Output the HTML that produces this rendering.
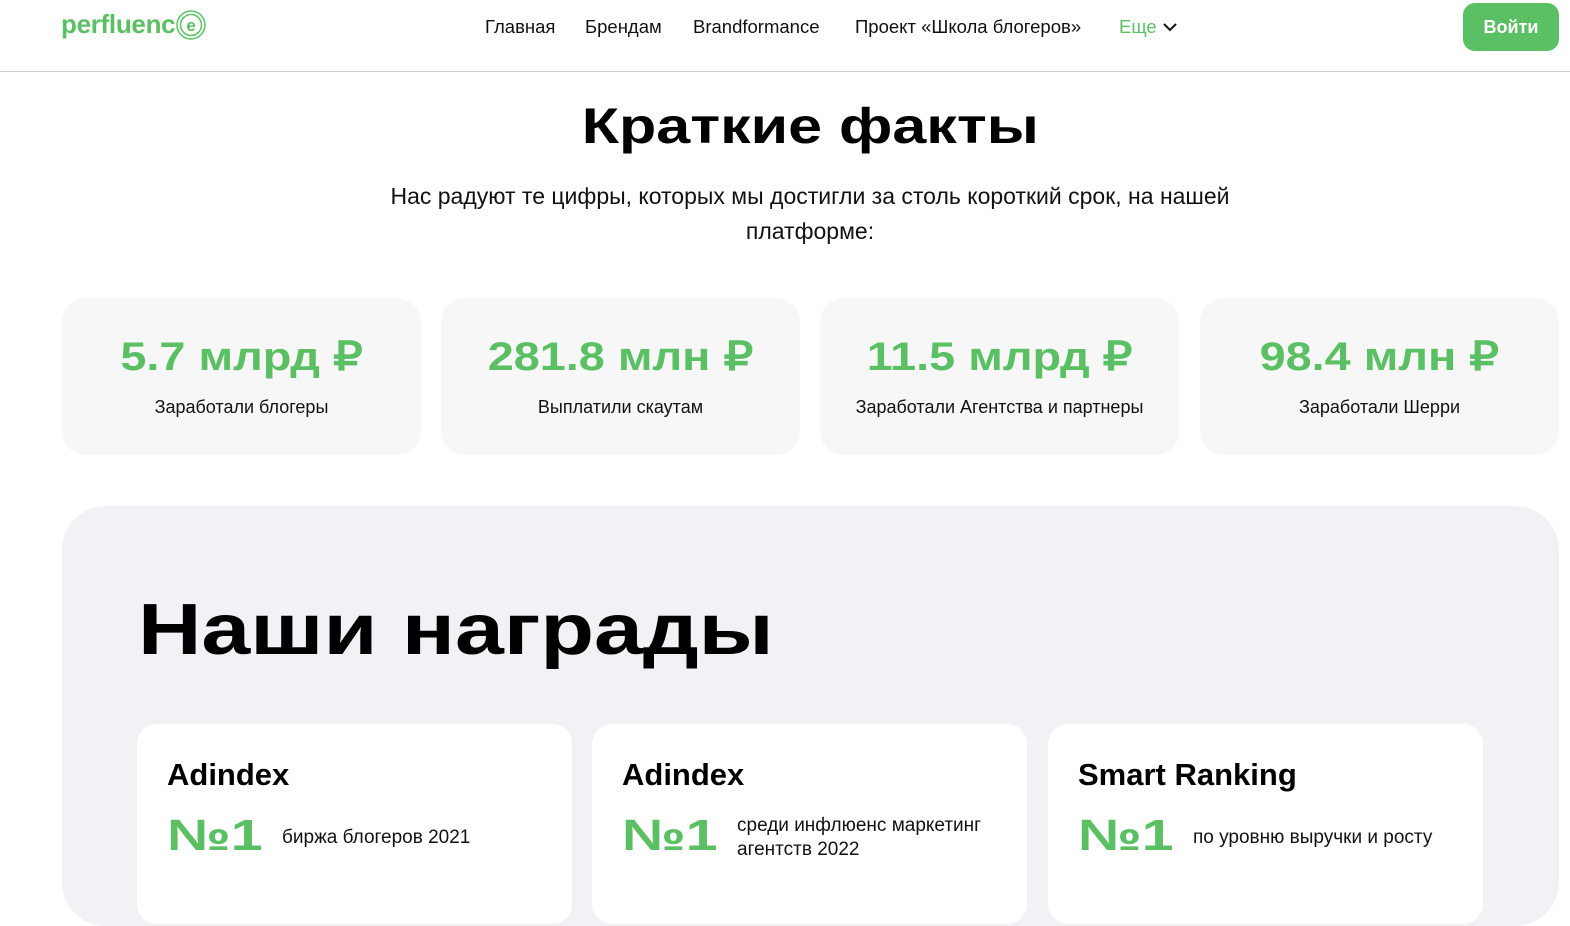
<!DOCTYPE html>
<html><head><meta charset="utf-8"><style>
*{margin:0;padding:0;box-sizing:border-box}
body{width:1570px;height:896px;overflow:hidden;background:#fff;font-family:"Liberation Sans",sans-serif;color:#000;position:relative}
.hdr{position:absolute;left:0;top:0;width:1570px;height:72px;border-bottom:1px solid #cfcfcf}
.logo{position:absolute;left:61px;top:9px;font-weight:bold;font-size:26px;color:#5bbf63;letter-spacing:-0.3px}
.nav{position:absolute;top:16px;font-size:18.5px;color:#111}
.btn{position:absolute;left:1463px;top:3px;width:96px;height:48px;border-radius:12px;background:#5bbf63;color:#fff;font-weight:bold;font-size:18px;text-align:center;line-height:48px}
.wide{display:inline-block;font-weight:900;transform-origin:center}
h1{position:absolute;left:0;width:1620px;top:98px;text-align:center;font-size:50px;line-height:56px}
.sub{position:absolute;left:360px;width:900px;top:179px;text-align:center;font-size:23px;line-height:35px;color:#111}
.stat{position:absolute;top:298px;width:359px;height:157px;border-radius:24px;background:#f7f7f7;text-align:center}
.num{position:absolute;left:0;width:100%;top:37px;font-size:40px;line-height:44px;color:#5bbf63}
.lbl{position:absolute;left:0;width:100%;top:99px;font-size:18px;color:#111}
.aw{position:absolute;left:62px;top:506px;width:1497px;height:420px;border-radius:44px;background:#f2f2f6}
h2{position:absolute;left:138px;top:590px;font-size:72px;line-height:80px}
.card{position:absolute;top:724px;width:435px;height:200px;border-radius:20px;background:#fff}
.ct{position:absolute;left:30px;top:32px;font-size:31px;line-height:38px;font-weight:bold}
.no{position:absolute;left:30px;top:88px;font-size:44px;line-height:48px;color:#5bbf63;font-weight:900;transform:scaleX(1.3);transform-origin:left}
.ctx{position:absolute;left:145px;font-size:19px;line-height:24px;color:#111}
</style></head><body>
<div class="hdr">
 <div class="logo">perfluenc<svg width="32" height="32" viewBox="0 0 32 32" style="vertical-align:-8px"><circle cx="16" cy="16" r="14" fill="none" stroke="#5bbf63" stroke-width="1.5"/><circle cx="16" cy="16" r="10.5" fill="none" stroke="#5bbf63" stroke-width="1.5"/><text x="16" y="22" text-anchor="middle" font-size="17" font-weight="bold" fill="#5bbf63" font-family="Liberation Sans">e</text></svg></div>
 <div class="nav" style="left:485px">Главная</div>
 <div class="nav" style="left:585px">Брендам</div>
 <div class="nav" style="left:693px">Brandformance</div>
 <div class="nav" style="left:855px">Проект «Школа блогеров»</div>
 <div class="nav" style="left:1119px;color:#5bbf63">Еще <svg width="16" height="12" viewBox="0 0 16 12" style="vertical-align:0"><path d="M2 3l6 6 6-6" fill="none" stroke="#111" stroke-width="2"/></svg></div>
 <div class="btn">Войти</div>
</div>
<h1><span class="wide" style="transform:scaleX(1.22)">Краткие факты</span></h1>
<div class="sub">Нас радуют те цифры, которых мы достигли за столь короткий срок, на нашей платформе:</div>
<div class="stat" style="left:62px"><div class="num"><span class="wide" style="transform:scaleX(1.17)">5.7 млрд ₽</span></div><div class="lbl">Заработали блогеры</div></div>
<div class="stat" style="left:441px"><div class="num"><span class="wide" style="transform:scaleX(1.17)">281.8 млн ₽</span></div><div class="lbl">Выплатили скаутам</div></div>
<div class="stat" style="left:820px"><div class="num"><span class="wide" style="transform:scaleX(1.17)">11.5 млрд ₽</span></div><div class="lbl">Заработали Агентства и партнеры</div></div>
<div class="stat" style="left:1200px"><div class="num"><span class="wide" style="transform:scaleX(1.17)">98.4 млн ₽</span></div><div class="lbl">Заработали Шерри</div></div>
<div class="aw"></div>
<h2><span class="wide" style="transform:scaleX(1.22);transform-origin:left">Наши награды</span></h2>
<div class="card" style="left:137px"><div class="ct">Adindex</div><div class="no">№1</div><div class="ctx" style="top:102px">биржа блогеров 2021</div></div>
<div class="card" style="left:592px"><div class="ct">Adindex</div><div class="no">№1</div><div class="ctx" style="top:90px">среди инфлюенс маркетинг<br>агентств 2022</div></div>
<div class="card" style="left:1048px"><div class="ct">Smart Ranking</div><div class="no">№1</div><div class="ctx" style="top:102px">по уровню выручки и росту</div></div>
</body></html>
